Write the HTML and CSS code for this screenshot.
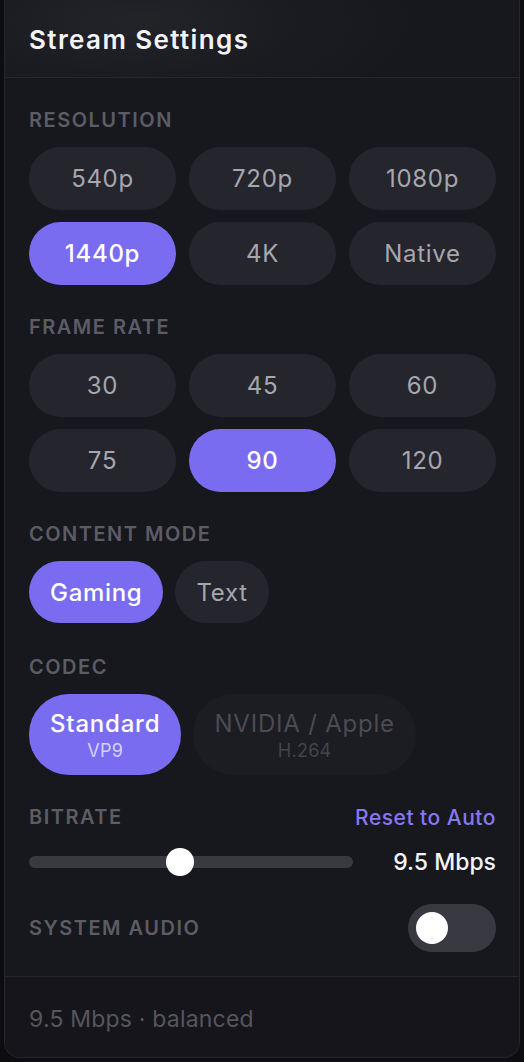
FILE: index.html
```html
<!DOCTYPE html>
<html>
<head>
<meta charset="utf-8">
<link rel="stylesheet" href="styles.css">
</head>
<body>
<div class="panel">
  <div class="header">
    <h1 class="title">Stream Settings</h1>
  </div>
  <div class="content">
    <section class="section">
      <div class="label">RESOLUTION</div>
      <div class="grid3">
        <div class="btn">540p</div>
        <div class="btn">720p</div>
        <div class="btn">1080p</div>
        <div class="btn active">1440p</div>
        <div class="btn">4K</div>
        <div class="btn">Native</div>
      </div>
    </section>
    <section class="section">
      <div class="label">FRAME RATE</div>
      <div class="grid3">
        <div class="btn">30</div>
        <div class="btn">45</div>
        <div class="btn">60</div>
        <div class="btn">75</div>
        <div class="btn active">90</div>
        <div class="btn">120</div>
      </div>
    </section>
    <section class="section mode-section">
      <div class="label">CONTENT MODE</div>
      <div class="row">
        <div class="btn pill active">Gaming</div>
        <div class="btn pill">Text</div>
      </div>
    </section>
    <section class="section">
      <div class="label">CODEC</div>
      <div class="row">
        <div class="btn codec active"><span class="main">Standard</span><span class="sub">VP9</span></div>
        <div class="btn codec disabled"><span class="main">NVIDIA / Apple</span><span class="sub">H.264</span></div>
      </div>
    </section>
    <section class="section bitrate">
      <div class="label-row">
        <div class="label">BITRATE</div>
        <div class="link">Reset to Auto</div>
      </div>
      <div class="slider-row">
        <div class="track"><div class="thumb" style="left: 46.5%"></div></div>
        <div class="value">9.5 Mbps</div>
      </div>
    </section>
    <section class="audio-row">
      <div class="label">SYSTEM AUDIO</div>
      <div class="toggle"><div class="knob"></div></div>
    </section>
  </div>
  <div class="footer">9.5 Mbps · balanced</div>
</div>
</body>
</html>
```

FILE: styles.css
```css
* { box-sizing: border-box; }
html, body {
  margin: 0;
  padding: 0;
  background: #0d0d11;
  width: 524px;
  height: 1062px;
  overflow: hidden;
}
body {
  font-family: Inter, "Noto Sans", sans-serif;
  color: #a2a2ab;
}
.panel {
  margin: 0 4px;
  width: 516px;
  height: 1058px;
  border: 1px solid #26262d;
  border-top: none;
  border-radius: 0 0 16px 16px;
  background: #17171e;
  display: flex;
  flex-direction: column;
  overflow: hidden;
}
.header {
  height: 78px;
  flex: none;
  display: flex;
  align-items: center;
  padding: 0 24px;
  border-bottom: 1px solid #27272e;
  background: radial-gradient(ellipse 280px 100px at 130px 22px, #23232a 0%, #1b1b22 55%, #17171e 100%);
}
.title {
  margin: 0;
  font-size: 26px;
  font-weight: 600;
  color: #f3f3f6;
  letter-spacing: 1.4px;
  padding-top: 2px;
}
.content {
  flex: 1;
  padding: 30px 23px 0 24px;
  display: flex;
  flex-direction: column;
}
.section {
  display: flex;
  flex-direction: column;
  gap: 15px;
  margin-bottom: 30px;
}
.mode-section { margin-bottom: 32px; }
.label {
  font-size: 20px;
  line-height: 24px;
  font-weight: 600;
  letter-spacing: 1.5px;
  color: #5c5c66;
}
.grid3 {
  display: grid;
  grid-template-columns: repeat(3, 1fr);
  column-gap: 13px;
  row-gap: 12px;
}
.btn {
  height: 63px;
  border-radius: 32px;
  background: #25252d;
  color: #a6a6af;
  font-size: 24px;
  font-weight: 400;
  letter-spacing: 0.7px;
  display: flex;
  align-items: center;
  justify-content: center;
}
.btn.active {
  background: #7a6cf0;
  color: #ffffff;
  font-weight: 500;
}
.row {
  display: flex;
  gap: 12px;
}
.pill {
  height: 62px;
  padding: 0 21px;
}
.codec {
  height: 81px;
  border-radius: 40px;
  flex-direction: column;
  padding: 2px 21px 0;
  line-height: 1;
}
.codec .main {
  font-size: 24px;
  letter-spacing: 0.8px;
}
.codec .sub {
  font-size: 18px;
  margin-top: 6px;
  letter-spacing: 0.3px;
  color: #d6d1fb;
  font-weight: 400;
}
.codec.disabled {
  background: #1c1c23;
  color: #4b4b54;
}
.codec.disabled .sub { color: #44444c; }
.bitrate { gap: 0; margin-bottom: 28px; }
.label-row {
  display: flex;
  justify-content: space-between;
  align-items: center;
  height: 24px;
}
.link {
  font-size: 21px;
  letter-spacing: 0.5px;
  color: #8677f2;
  font-weight: 500;
}
.slider-row {
  margin-top: 19px;
  height: 28px;
  display: flex;
  align-items: center;
  justify-content: space-between;
}
.track {
  position: relative;
  width: 324px;
  height: 12px;
  border-radius: 6px;
  background: #393941;
}
.thumb {
  position: absolute;
  top: 50%;
  width: 28px;
  height: 28px;
  margin: -14px 0 0 -14px;
  border-radius: 50%;
  background: #ffffff;
}
.value {
  font-size: 23px;
  font-weight: 500;
  color: #f4f4f7;
}
.audio-row {
  height: 48px;
  display: flex;
  align-items: center;
  justify-content: space-between;
}
.toggle {
  width: 88px;
  height: 48px;
  border-radius: 24px;
  background: #393941;
  padding: 8px;
}
.knob {
  width: 32px;
  height: 32px;
  border-radius: 50%;
  background: #ffffff;
}
.footer {
  height: 81px;
  flex: none;
  border-top: 1px solid #26262d;
  background: #15151b;
  padding: 4px 24px 0;
  display: flex;
  align-items: center;
  font-size: 23px;
  letter-spacing: 0.2px;
  color: #56565f;
}
```
